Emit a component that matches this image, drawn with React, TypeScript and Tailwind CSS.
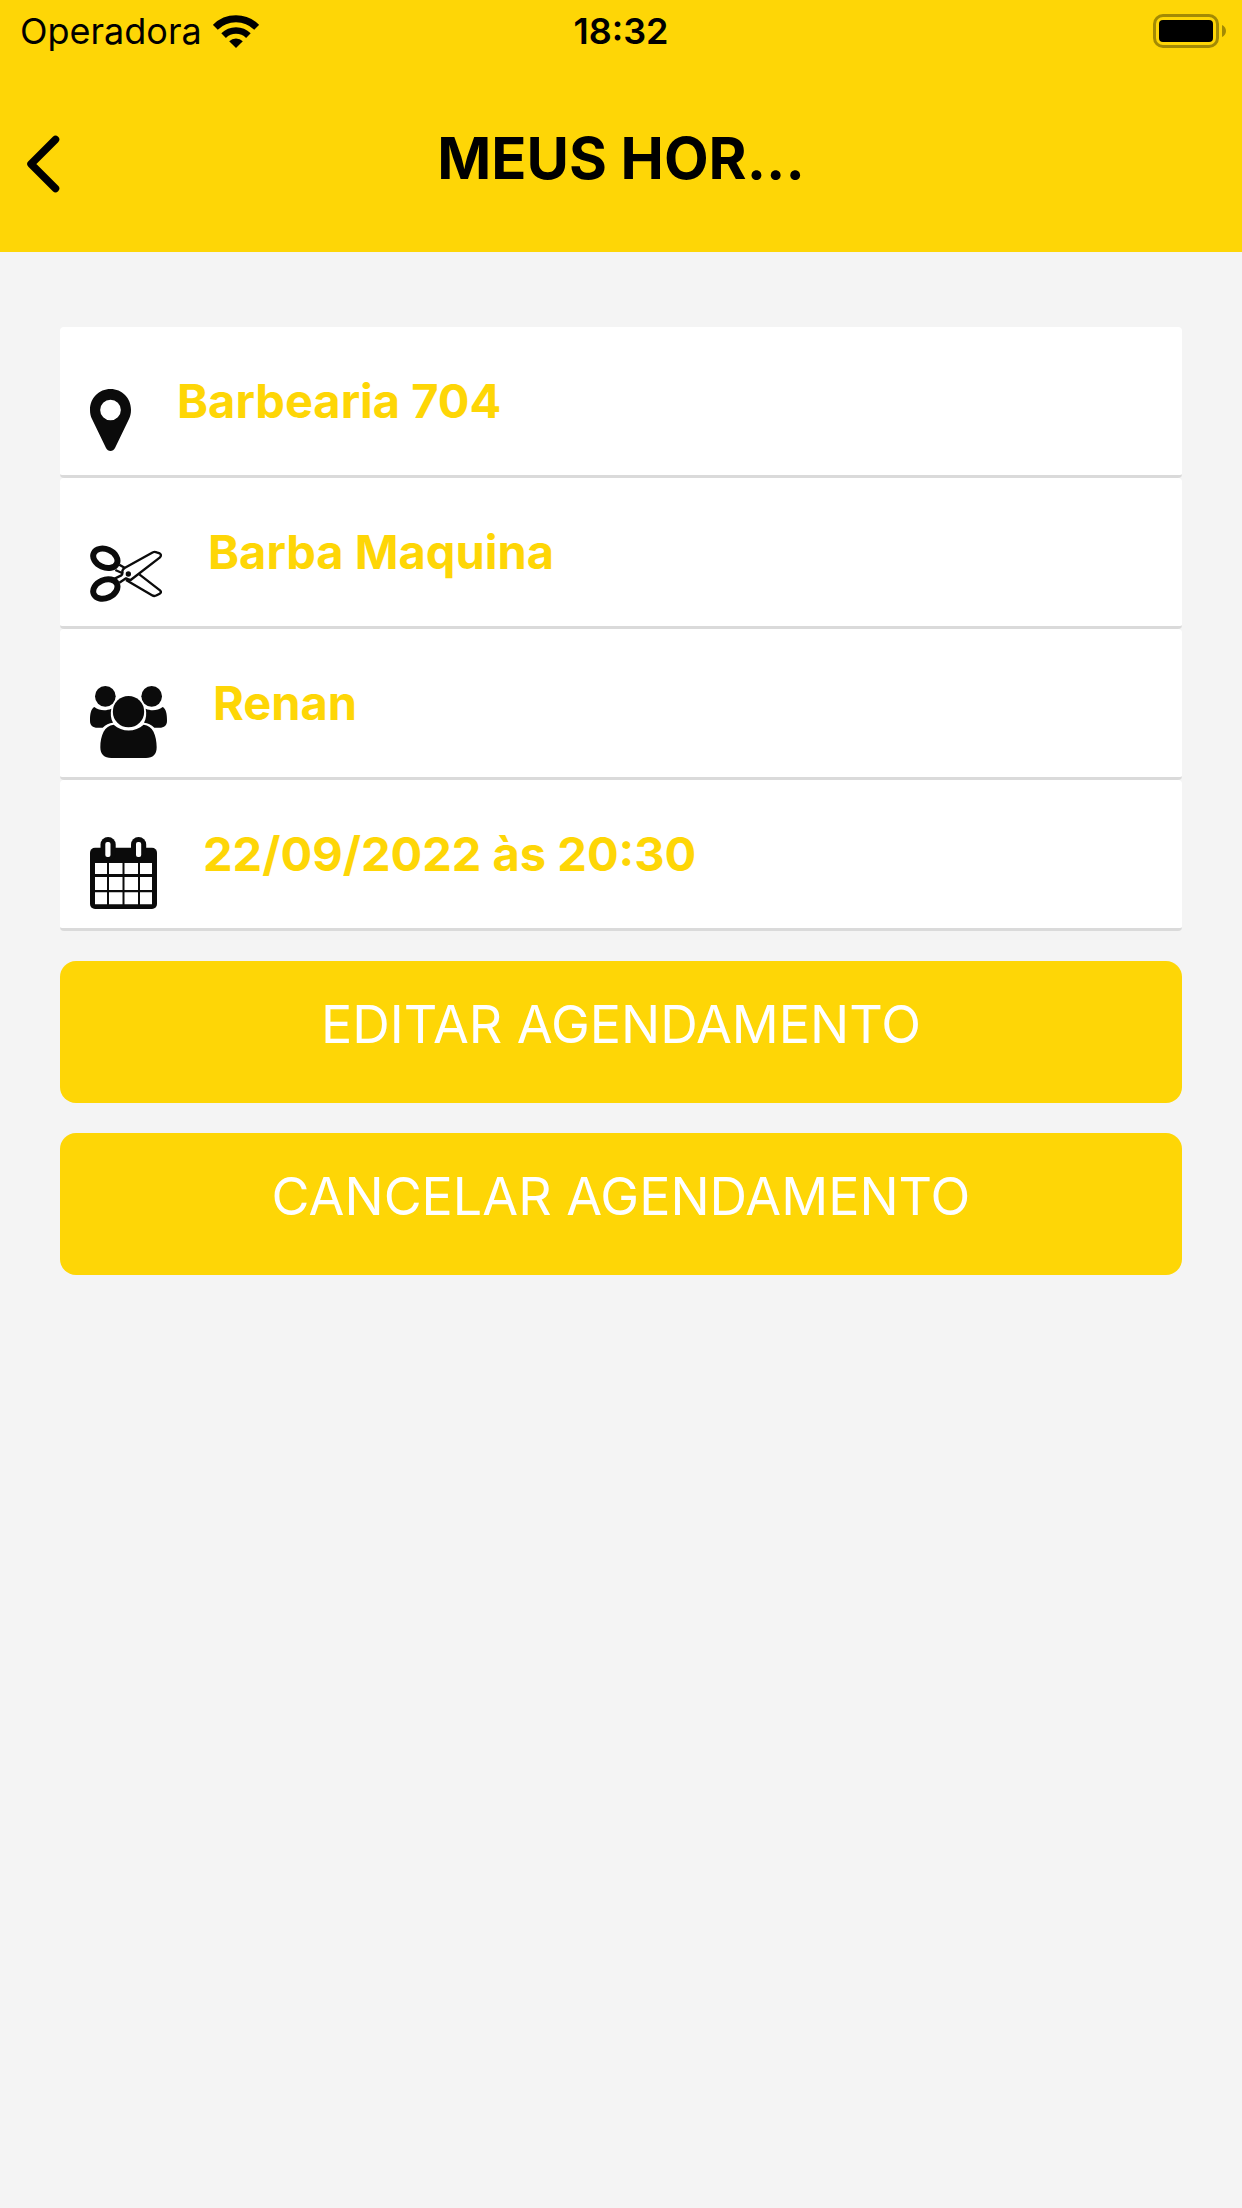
import React from "react";

interface IconProps {
  className?: string;
}

const WifiIcon: React.FC<IconProps> = ({ className }) => (
  <svg className={className} viewBox="0 0 46 33" fill="none" aria-hidden="true">
    <path d="M2.3 12.3A29.3 29.3 0 0 1 43.7 12.3" stroke="#000" strokeWidth="7" />
    <path d="M10.6 20.6A17.5 17.5 0 0 1 35.4 20.6" stroke="#000" strokeWidth="6.5" />
    <path d="M23 33L16.2 26.2A9.6 9.6 0 0 1 29.8 26.2Z" fill="#000" />
  </svg>
);

const BatteryIcon: React.FC<IconProps> = ({ className }) => (
  <svg className={className} viewBox="0 0 74 34" fill="none" aria-hidden="true">
    <rect x="1.5" y="1.5" width="63" height="31" rx="8.5" stroke="#a38a04" strokeWidth="3" />
    <rect x="6" y="6" width="54" height="22" rx="4" fill="#000" />
    <path d="M69 11C71.500 12 73 14.500 73 17C73 19.500 71.500 22 69 23Z" fill="#a38a04" />
  </svg>
);

const BackIcon: React.FC<IconProps> = ({ className }) => (
  <svg className={className} viewBox="0 0 34 58" fill="none" aria-hidden="true">
    <path d="M29.500 4.500L5 29L29.500 53.500" stroke="#000" strokeWidth="7.500" strokeLinecap="round" strokeLinejoin="round" />
  </svg>
);

const PinIcon: React.FC<IconProps> = ({ className }) => (
  <svg className={className} viewBox="120 222 123 216" aria-hidden="true">
    <path
      d="M181.500 237C147 237 120 264 120 299C120 310 122 319 126 327L168 414C171 420 176 423 181.500 423C187 423 192 420 195 414L237 327C241 319 243 310 243 299C243 264 216 237 181.500 237ZM181.500 269A31 31 0 1 1 181.500 331A31 31 0 1 1 181.500 269Z"
      fill="#0b0b0b"
      fillRule="evenodd"
    />
  </svg>
);

const ScissorsIcon: React.FC<IconProps> = ({ className }) => (
  <svg className={className} viewBox="120 195 216 216" fill="none" aria-hidden="true">
    <g fill="#fff" stroke="#0b0b0b" strokeWidth="7" strokeLinejoin="round">
      <path d="M228 330L306 376Q313 380 320 376L329 371Q336 367 330 361L268 313" />
      <path d="M208 284L225 294M196 300L216 309" />
      <path d="M194 326L214 316Q219 312 217 303Q218 297 225 293L309 247Q314 244 320 247L329 250Q336 255 330 262L242 330Q235 329 228 325L208 338" />
    </g>
    <g fill="#fff" stroke="#0b0b0b" strokeWidth="18">
      <ellipse cx="166" cy="265" rx="38" ry="27" transform="rotate(24 166 265)" />
      <ellipse cx="166" cy="357" rx="38" ry="27" transform="rotate(-24 166 357)" />
    </g>
    <circle cx="235" cy="312" r="8" fill="#0b0b0b" />
  </svg>
);

const GroupIcon: React.FC<IconProps> = ({ className }) => (
  <svg className={className} viewBox="120 168 231 216" fill="#0b0b0b" aria-hidden="true">
    <circle cx="166" cy="199" r="31" />
    <circle cx="305" cy="199" r="31" />
    <circle cx="235.500" cy="245" r="47" />
    <path d="M133 231C123 236 120 252 120 272C120 286 128 293 143 293H158C167 283 177 280 189 278C182 266 181 250 184 236C168 243 148 242 133 231Z" />
    <path d="M338 231C348 236 351 252 351 272C351 286 343 293 328 293H313C304 283 294 280 282 278C289 266 290 250 287 236C303 243 323 242 338 231Z" />
    <path d="M191 284C164 286 151 316 151 352C151 374 163 384 184 384H288C309 384 320 374 320 352C320 316 308 286 281 284C256 307 216 307 191 284Z" />
  </svg>
);

const CalendarIcon: React.FC<IconProps> = ({ className }) => (
  <svg className={className} viewBox="0 0 67 72" fill="#0b0b0b" aria-hidden="true">
    <rect x="0" y="10.700" width="67" height="61.300" rx="5" />
    <rect x="10.500" y="0" width="15.200" height="24" rx="7.500" />
    <rect x="41" y="0" width="15.200" height="24" rx="7.500" />
    <g fill="#fff">
      <rect x="15.300" y="5" width="5.200" height="15" rx="2" />
      <rect x="46" y="5" width="5.200" height="15" rx="2" />
      <path d="M5 26h12v11H5zM19 26h13.500v11H19zM34.500 26h13.500v11h-13.500zM50 26h12v11H50z" />
      <path d="M5 40h12v13H5zM19 40h13.500v13H19zM34.500 40h13.500v13h-13.500zM50 40h12v13H50z" />
      <path d="M5 55.300h12v12H5zM19 55.300h13.500v12H19zM34.500 55.300h13.500v12h-13.500zM50 55.300h12v12H50z" />
    </g>
  </svg>
);

const details = [
  { text: "Barbearia 704", icon: <PinIcon className="h-[72px] w-[41px]" /> },
  { text: "Barba Maquina", icon: <ScissorsIcon className="h-[72px] w-[72px]" /> },
  { text: "Renan", icon: <GroupIcon className="h-[72px] w-[77px]" /> },
  { text: "22/09/2022 às 20:30", icon: <CalendarIcon className="h-[72px] w-[67px]" /> },
];

const actions = ["EDITAR AGENDAMENTO", "CANCELAR AGENDAMENTO"];

const App: React.FC = () => {
  return (
    <div className="min-h-screen bg-[#f4f4f4] font-['Inter',sans-serif] text-black">
      <header className="bg-[#fed606]">
        <div className="grid h-[62px] grid-cols-[1fr_auto_1fr] items-center px-[15px] text-[36px]">
          <div className="flex items-center gap-[11px] pl-[5px]">
            <span>Operadora</span>
            <WifiIcon className="h-[33px] w-[46px]" />
          </div>
          <span className="font-semibold">18:32</span>
          <BatteryIcon className="h-[34px] w-[74px] justify-self-end" />
        </div>
        <div className="grid h-[190px] grid-cols-[1fr_auto_1fr] items-center px-[26px] pt-[2px]">
          <button type="button" aria-label="Voltar" className="justify-self-start pt-3">
            <BackIcon className="h-[58px] w-[34px]" />
          </button>
          <h1 className="text-[58px] font-bold">MEUS HOR...</h1>
        </div>
      </header>

      <main className="flex flex-col gap-[30px] px-[60px] pt-[75px]">
        <ul>
          {details.map((item) => (
            <li
              key={item.text}
              className="flex h-[151px] items-center gap-[46px] rounded border-b-3 border-[#dadada] bg-white px-[30px]"
            >
              <span className="mb-[19px] self-end">{item.icon}</span>
              <span className="text-[47px] font-bold text-[#fed606]">{item.text}</span>
            </li>
          ))}
        </ul>

        {actions.map((label) => (
          <button
            key={label}
            type="button"
            className="h-[142px] rounded-2xl bg-[#fed606] pb-[14px] text-[52px] text-white"
          >
            {label}
          </button>
        ))}
      </main>
    </div>
  );
};

export default App;
